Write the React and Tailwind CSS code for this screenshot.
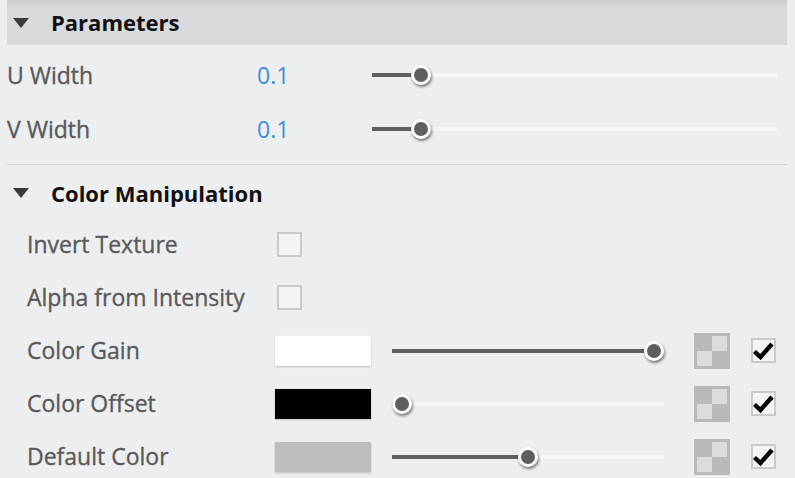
import React from "react";

const Tri = () => (
  <svg width="16" height="10" viewBox="0 0 16 10" className="shrink-0">
    <polygon points="0,0 16,0 8,10" fill="#3a3a3a" />
  </svg>
);

function Slider({ width, pos, filled }) {
  return (
    <div className="relative h-[22px]" style={{ width }}>
      <div className="absolute left-0 right-0 top-[9px] h-[4px] bg-[#f7f7f8]" />
      {filled && (
        <div
          className="absolute left-0 top-[9px] h-[4px] bg-[#5f5f5f]"
          style={{ width: pos }}
        />
      )}
      <div
        className="absolute top-[1px] w-[20px] h-[20px] rounded-full bg-[#5f5f5f] border-[3px] border-white shadow-[1px_2px_3px_rgba(0,0,0,0.5)]"
        style={{ left: pos - 10 }}
      />
    </div>
  );
}

const EmptyBox = () => (
  <div className="w-[25px] h-[25px] border-2 border-[#cacaca] bg-[#f4f4f5]" />
);

const CheckBox = () => (
  <div className="w-[25px] h-[25px] border-2 border-[#cacaca] bg-[#f4f4f5] flex items-center justify-center">
    <svg width="21" height="21" viewBox="0 0 21 21">
      <polyline
        points="1.5,11.5 7.5,17 19,4"
        fill="none"
        stroke="#000"
        strokeWidth="4.4"
        strokeLinecap="butt"
        strokeLinejoin="miter"
      />
    </svg>
  </div>
);

const Checker = () => (
  <div className="w-[36px] h-[36px] bg-[#b9b9b9] p-[3px] grid grid-cols-2 grid-rows-2">
    <div />
    <div className="bg-[#dcdcdc]" />
    <div className="bg-[#dcdcdc]" />
    <div />
  </div>
);

const labelCls =
  "text-[23px] text-[#595959] [-webkit-text-stroke:0.35px_#595959]";

function ParamRow({ label, value }) {
  return (
    <div className="h-[54px] flex items-center">
      <div className={`w-[257px] pl-[7px] ${labelCls}`}>{label}</div>
      <div className="w-[115px] text-[23px] text-[#3d8fdc]">{value}</div>
      <Slider width={405} pos={49} filled />
    </div>
  );
}

function ColorRow({ label, swatch, pos }) {
  return (
    <div className="h-[53px] flex items-center">
      <div className={`w-[275px] pl-[27px] ${labelCls}`}>{label}</div>
      <div className={`w-[96px] h-[30px] shadow-[0_1px_2px_rgba(0,0,0,0.2)] ${swatch}`} />
      <div className="ml-[21px]">
        <Slider width={272} pos={pos} filled />
      </div>
      <div className="ml-[30px]">
        <Checker />
      </div>
      <div className="ml-[21px]">
        <CheckBox />
      </div>
    </div>
  );
}

function CheckRow({ label }) {
  return (
    <div className="h-[53px] flex items-center">
      <div className={`w-[277px] pl-[27px] ${labelCls}`}>{label}</div>
      <EmptyBox />
    </div>
  );
}

export default function App() {
  return (
    <div
      className="w-[795px] h-[478px] overflow-hidden bg-[#edeef0]"
      style={{ fontFamily: '"Open Sans", "Noto Sans", sans-serif' }}
    >
      <div className="ml-[7px] mr-[8px] h-[45px] bg-[linear-gradient(to_bottom,#cbccd0,#d9dadd_7px)] flex items-center">
        <div className="ml-[6px] w-[38px]">
          <Tri />
        </div>
        <div className="text-[22px] font-bold text-[#111]">Parameters</div>
      </div>
      <div className="h-[3px]" />
      <ParamRow label="U Width" value="0.1" />
      <ParamRow label="V Width" value="0.1" />
      <div className="mt-[8px] ml-[7px] mr-[8px] h-px bg-[#d6d7da]" />
      <div className="h-[53px] flex items-center pt-[3px]">
        <div className="ml-[13px] w-[38px]">
          <Tri />
        </div>
        <div className="text-[22px] font-bold text-[#111]">Color Manipulation</div>
      </div>
      <CheckRow label="Invert Texture" />
      <CheckRow label="Alpha from Intensity" />
      <ColorRow label="Color Gain" swatch="bg-white" pos={262} />
      <ColorRow label="Color Offset" swatch="bg-black" pos={10} />
      <ColorRow label="Default Color" swatch="bg-[#bdbdbd]" pos={136} />
    </div>
  );
}
